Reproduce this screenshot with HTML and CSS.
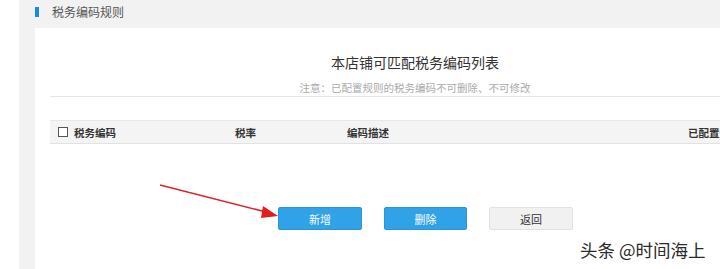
FILE: index.html
```html
<!DOCTYPE html>
<html>

<head>
    <meta charset="utf-8">
    <title>税务编码规则</title>
    <link rel="stylesheet" href="styles.css">
</head>

<body>
    <div class="page">
        <div class="side"></div>
        <div class="main">
            <div class="head">
                <span class="mark"></span>
                <span class="head-title">税务编码规则</span>
            </div>
            <div class="panel">
                <div class="intro">
                    <h2 class="title">本店铺可匹配税务编码列表</h2>
                    <p class="note">注意：已配置规则的税务编码不可删除、不可修改</p>
                </div>
                <div class="table-head">
                    <div class="cell first"><span class="check"></span>税务编码</div>
                    <div class="cell">税率</div>
                    <div class="cell">编码描述</div>
                    <div class="cell">已配置规则</div>
                </div>
                <div class="actions">
                    <button class="btn blue">新增</button>
                    <button class="btn blue narrow">删除</button>
                    <button class="btn plain">返回</button>
                </div>
            </div>
        </div>
    </div>

    <svg class="arrow" width="720" height="269" viewBox="0 0 720 269">
        <line x1="160" y1="185" x2="266" y2="212" stroke="#d8262a" stroke-width="1.6" />
        <polygon points="278,216 263,206 261,218" fill="#e11d1d" />
    </svg>

    <div class="watermark">头条 @时间海上</div>
</body>

</html>
```

FILE: styles.css
```css
body {
    margin: 0;
    padding: 0;
    width: 720px;
    height: 269px;
    overflow: hidden;
    background-color: white;
    font-family: "Noto Sans CJK SC", "Noto Sans", sans-serif;
    position: relative;
}

.page {
    display: flex;
    height: 269px;
}

.side {
    width: 19px;
    flex: none;
    background-color: white;
}

.main {
    flex: 1;
    display: flex;
    flex-direction: column;
    background-color: #f2f2f2;
}

.head {
    height: 28px;
    display: flex;
    align-items: center;
    padding-left: 16px;
    padding-bottom: 4px;
    box-sizing: border-box;
}

.mark {
    width: 4px;
    height: 10px;
    background-color: #1e88e0;
    margin-right: 13px;
}

.head-title {
    font-size: 12px;
    color: #555;
    line-height: 14px;
}

.panel {
    flex: 1;
    margin-left: 16px;
    width: 760px;
    background-color: white;
    padding: 0 15px;
    box-sizing: border-box;
}

.intro {
    padding-top: 24px;
    text-align: center;
    border-bottom: 1px solid #e6e6e6;
}

.title {
    margin: 0;
    font-size: 14px;
    font-weight: normal;
    line-height: 20px;
    color: #333;
}

.note {
    margin: 8px 0 0;
    font-size: 10.5px;
    line-height: 16px;
    color: #aaa;
}

.table-head {
    margin-top: 23px;
    height: 24px;
    box-sizing: border-box;
    display: grid;
    grid-template-columns: 185px 112px 341px 1fr;
    align-items: center;
    background-color: #f4f4f4;
    border-top: 1px solid #e8e8e8;
    border-bottom: 1px solid #e2e2e2;
}

.cell {
    font-size: 10.5px;
    font-weight: bold;
    color: #333;
    white-space: nowrap;
    display: flex;
    align-items: center;
}

.cell.first {
    padding-left: 8px;
}

.check {
    width: 8px;
    height: 8px;
    border: 1px solid #555;
    margin-right: 6px;
    background-color: white;
}

.actions {
    margin-top: 63px;
    margin-left: 228px;
    display: flex;
    gap: 22px;
}

.btn {
    width: 84px;
    height: 23px;
    padding: 0;
    font-family: inherit;
    font-size: 11px;
    border-radius: 2px;
    cursor: pointer;
}

.btn.narrow {
    width: 83px;
}

.btn.blue {
    background-color: #2fa2e8;
    border: 1px solid #2b93d6;
    color: white;
}

.btn.plain {
    background-color: #f1f1f1;
    border: 1px solid #e2e2e2;
    color: #333;
}

.arrow {
    position: absolute;
    top: 0;
    left: 0;
    pointer-events: none;
}

.watermark {
    position: absolute;
    left: 580px;
    top: 240px;
    font-size: 17.5px;
    line-height: 20px;
    color: #2a2a2a;
    text-shadow: 0 0 2px white;
    white-space: nowrap;
}
```
